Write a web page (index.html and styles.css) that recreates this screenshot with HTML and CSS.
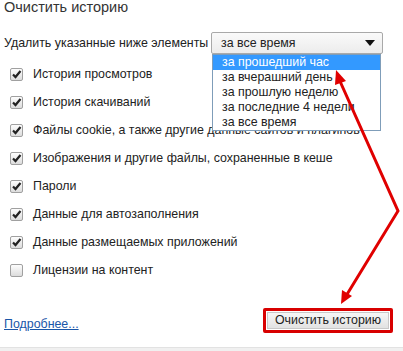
FILE: index.html
```html
<!DOCTYPE html>
<html>
<head>
  <title>Очистить историю</title>
  <meta name="viewport" content="width=device-width, initial-scale=1.0">
  <link rel="stylesheet" href="styles.css">
</head>
<body>
  <div class="page">
    <h1 class="title">Очистить историю</h1>

    <div class="period-row">
      <span class="period-label">Удалить указанные ниже элементы</span>
      <div class="select">
        <span class="select-value">за все время</span>
        <span class="caret"></span>
        <ul class="dropdown">
          <li class="active">за прошедший час</li>
          <li>за вчерашний день</li>
          <li>за прошлую неделю</li>
          <li>за последние 4 недели</li>
          <li>за все время</li>
        </ul>
      </div>
    </div>

    <ul class="items">
      <li><span class="box checked"></span>История просмотров</li>
      <li><span class="box checked"></span>История скачиваний</li>
      <li><span class="box checked"></span>Файлы cookie, а также другие данные сайтов и плагинов</li>
      <li><span class="box checked"></span>Изображения и другие файлы, сохраненные в кеше</li>
      <li><span class="box checked"></span>Пароли</li>
      <li><span class="box checked"></span>Данные для автозаполнения</li>
      <li><span class="box checked"></span>Данные размещаемых приложений</li>
      <li><span class="box"></span>Лицензии на контент</li>
    </ul>

    <div class="footer">
      <a href="#" class="more">Подробнее...</a>
      <div class="btn-wrap">
        <button class="clear-btn">Очистить историю</button>
      </div>
    </div>
    <div class="bottom-bar"></div>

    <!-- red arrows drawn over the screenshot -->
    <svg class="arrows" width="403" height="351" viewBox="0 0 403 351">
      <polyline points="339,79 398,211 346,296" fill="none" stroke="#e00000" stroke-width="3" stroke-linejoin="miter"/>
      <polygon points="336,70 346,81 335,85" fill="#e00000"/>
      <polygon points="341,304 352,296 342,290" fill="#e00000"/>
    </svg>
  </div>
</body>
</html>
```

FILE: styles.css
```css
* {
  box-sizing: border-box;
}

body {
  margin: 0;
  background: #fff;
  color: #222;
  font-family: "Liberation Sans", Arial, sans-serif;
  font-size: 12.4px;
}

.page {
  position: relative;
  width: 403px;
  height: 351px;
  overflow: hidden;
  padding-left: 4px;
}

.title {
  margin: 0;
  font-size: 14.5px;
  font-weight: normal;
  line-height: 14px;
  color: #333;
}

.period-row {
  display: flex;
  align-items: center;
  margin-top: 18px;
  height: 22px;
}

.period-label {
  flex: none;
  width: 207px;
  white-space: nowrap;
}

.select {
  position: relative;
  display: flex;
  align-items: center;
  width: 172px;
  height: 22px;
  padding-left: 9px;
  border: 1px solid #a9a9a9;
  border-radius: 2px;
  background: linear-gradient(#fafafa, #ececec);
}

.select-value {
  flex: 1;
}

.caret {
  width: 0;
  height: 0;
  margin-right: 7px;
  border-left: 5px solid transparent;
  border-right: 5px solid transparent;
  border-top: 6px solid #111;
}

.dropdown {
  position: absolute;
  top: 21px;
  left: 0;
  width: 169px;
  margin: 0;
  padding: 0;
  list-style: none;
  background: #fff;
  border: 1px solid #7f9db9;
  z-index: 2;
}

.dropdown li {
  height: 15px;
  line-height: 15px;
  padding-left: 9px;
  white-space: nowrap;
}

.dropdown li.active {
  background: #3399ff;
  color: #fff;
}

.items {
  margin: 6px 0 0;
  padding: 0 0 0 6px;
  list-style: none;
}

.items li {
  display: flex;
  align-items: center;
  height: 28px;
  white-space: nowrap;
}

.box {
  width: 13px;
  height: 13px;
  margin-right: 10px;
  border: 1px solid #a0a0a0;
  border-radius: 2px;
  background: linear-gradient(#fdfdfd, #dcdcdc);
  flex: none;
}

.box.checked {
  background: url("data:image/svg+xml,%3Csvg xmlns='http://www.w3.org/2000/svg' width='11' height='11'%3E%3Cpath d='M2 5.5 L4.5 8 L9.5 2' fill='none' stroke='%23222' stroke-width='2.2'/%3E%3C/svg%3E") center no-repeat,
    linear-gradient(#fdfdfd, #dcdcdc);
}

.footer {
  display: flex;
  align-items: center;
  justify-content: space-between;
  margin-top: 24px;
  padding-right: 10px;
}

.more {
  color: #1a56a8;
  padding-top: 7px;
}

.btn-wrap {
  border: 3px solid #d80000;
  border-radius: 2px;
  padding: 1px;
}

.clear-btn {
  display: block;
  width: 122px;
  height: 17px;
  padding: 0;
  border: 1px solid #c8c8c8;
  background: linear-gradient(#f6f6f6, #e2e2e2);
  color: #222;
  font-family: "Liberation Sans", Arial, sans-serif;
  font-size: 12.4px;
  line-height: 15px;
}

.bottom-bar {
  position: absolute;
  left: 0;
  right: 0;
  bottom: 0;
  height: 4px;
  background: #f0f0f0;
  border-top: 1px solid #e2e2e2;
}

.arrows {
  position: absolute;
  top: 0;
  left: 0;
  pointer-events: none;
  z-index: 3;
}
```
